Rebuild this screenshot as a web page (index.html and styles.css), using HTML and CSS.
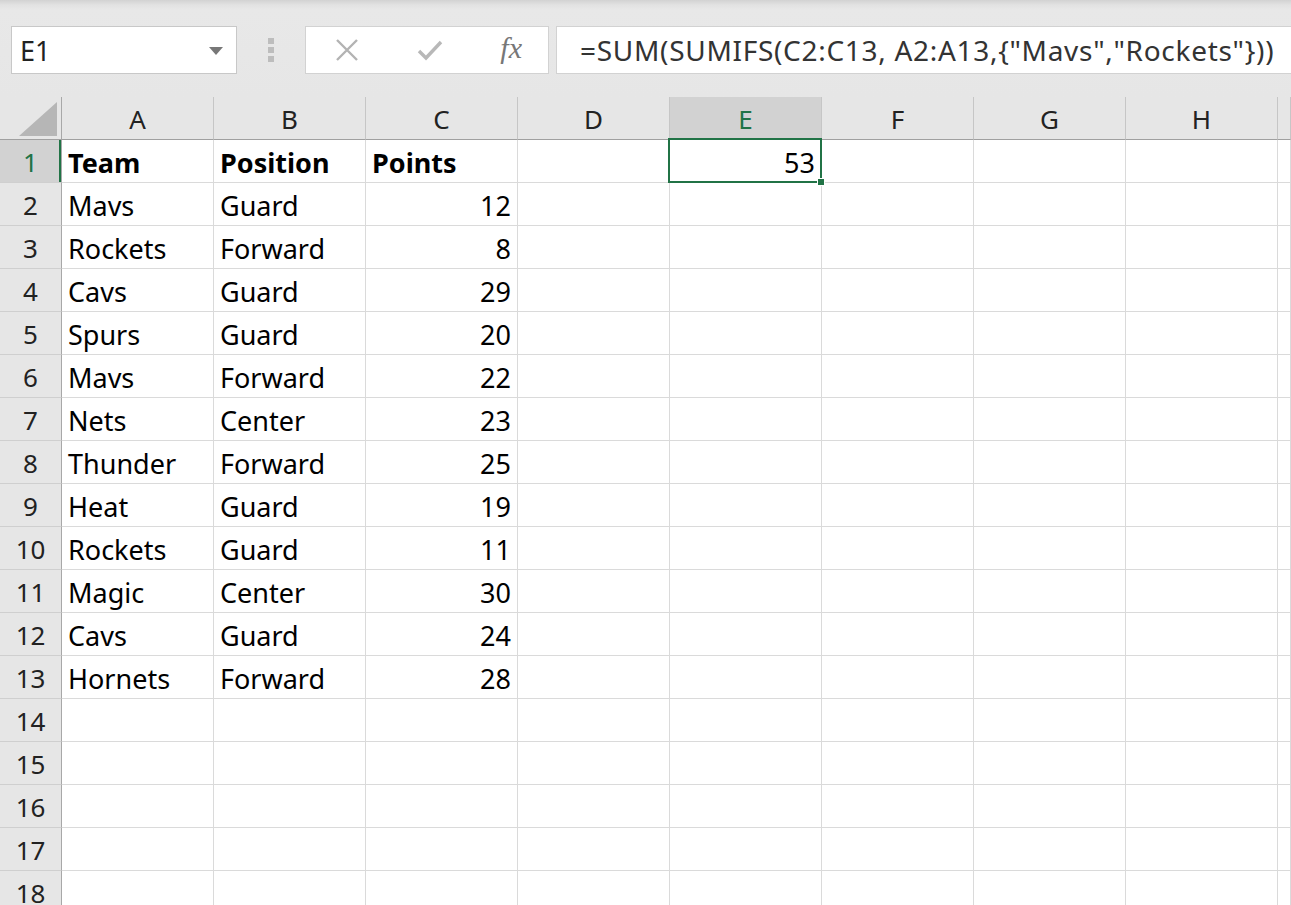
FILE: index.html
```html
<!DOCTYPE html>
<html lang="en">
<head>
    <meta charset="UTF-8">
    <title>Book1 - Excel</title>
    <link rel="stylesheet" href="styles.css">
</head>
<body>
    <div class="toolbar">
        <div class="name-box">
            <span>E1</span>
            <svg class="caret" width="14" height="8" viewBox="0 0 14 8"><path d="M0 0h14L7 8z" fill="#777"/></svg>
        </div>
        <div class="grip"><i></i><i></i><i></i></div>
        <div class="fx-buttons">
            <svg width="24" height="24" viewBox="0 0 24 24"><path d="M2 2L22 22M22 2L2 22" stroke="#b3b3b3" stroke-width="2.4" fill="none"/></svg>
            <svg width="26" height="22" viewBox="0 0 26 22"><path d="M2 12L9 19L24 3" stroke="#b8b8b8" stroke-width="3.4" fill="none"/></svg>
            <span class="fx">fx</span>
        </div>
        <div class="formula">=SUM(SUMIFS(C2:C13, A2:A13,{"Mavs","Rockets"}))</div>
    </div>

    <div class="sheet" id="sheet">
        <div class="corner"><span class="tri"></span></div>
    </div>

    <script>
        const cols = ["A", "B", "C", "D", "E", "F", "G", "H", ""];
        const rows = [
            ["Team", "Position", "Points"],
            ["Mavs", "Guard", 12],
            ["Rockets", "Forward", 8],
            ["Cavs", "Guard", 29],
            ["Spurs", "Guard", 20],
            ["Mavs", "Forward", 22],
            ["Nets", "Center", 23],
            ["Thunder", "Forward", 25],
            ["Heat", "Guard", 19],
            ["Rockets", "Guard", 11],
            ["Magic", "Center", 30],
            ["Cavs", "Guard", 24],
            ["Hornets", "Forward", 28]
        ];
        const sheet = document.getElementById("sheet");

        function cell(cls, text) {
            const el = document.createElement("div");
            el.className = cls;
            if (text !== undefined) el.textContent = text;
            sheet.appendChild(el);
            return el;
        }

        cols.forEach(c => cell(c === "E" ? "col-head active" : "col-head", c));

        for (let r = 1; r <= 19; r++) {
            cell(r === 1 ? "row-head active" : "row-head", r);
            const data = rows[r - 1] || [];
            cols.forEach((c, i) => {
                let cls = "cell";
                let text = data[i];
                if (r === 1 && i < 3) cls += " bold";
                if (typeof text === "number") cls += " num";
                const el = cell(cls, text);
                if (r === 1 && c === "E") {
                    el.className = "cell num selected";
                    el.textContent = "53";
                    const h = document.createElement("span");
                    h.className = "handle";
                    el.appendChild(h);
                }
            });
        }
    </script>
</body>
</html>
```

FILE: styles.css
```css
body {
    margin: 0;
    height: 905px;
    overflow: hidden;
    background: #fff;
    font-family: "Noto Sans", "Open Sans", sans-serif;
    color: #000;
}
.toolbar {
    height: 97px;
    box-sizing: border-box;
    padding: 26px 0 0 11px;
    display: flex;
    align-items: flex-start;
    background: linear-gradient(180deg, #d2d2d2 0, #e2e2e2 5px, #e8e8e8 10px, #e6e6e6 100%);
}
.name-box {
    width: 226px;
    height: 48px;
    box-sizing: border-box;
    background: #fff;
    border: 1px solid #c8c8c8;
    display: flex;
    align-items: center;
    justify-content: space-between;
    padding: 0 13px 0 8px;
    font-size: 27px;
    color: #222;
}
.caret {
    margin-top: 2px;
}
.grip {
    width: 68px;
    height: 48px;
    display: flex;
    flex-direction: column;
    align-items: center;
    justify-content: center;
    gap: 3px;
}
.grip i {
    width: 6px;
    height: 6px;
    background: #bdbdbd;
}
.fx-buttons {
    width: 244px;
    height: 48px;
    box-sizing: border-box;
    background: #fff;
    border: 1px solid #d2d2d2;
    display: flex;
    align-items: center;
    justify-content: space-between;
    padding: 0 26px 0 29px;
}
.fx {
    font-family: "Liberation Serif", serif;
    font-style: italic;
    font-size: 30px;
    color: #777;
    margin-top: -4px;
}
.formula {
    flex: 1;
    margin-left: 7px;
    height: 48px;
    box-sizing: border-box;
    background: #fff;
    border: 1px solid #d2d2d2;
    border-right: none;
    padding-left: 23px;
    font-size: 28px;
    letter-spacing: 0.7px;
    line-height: 46px;
    color: #333;
    white-space: nowrap;
    overflow: hidden;
}
.sheet {
    display: grid;
    grid-template-columns: 62px repeat(8, 152px) 1fr;
    grid-auto-rows: 43px;
}
.sheet > div {
    box-sizing: border-box;
    border-right: 1px solid #dadada;
    border-bottom: 1px solid #dadada;
    display: flex;
    align-items: center;
    font-size: 27px;
    white-space: nowrap;
}
.sheet > .corner {
    background: #e6e6e6;
    border-right: 1px solid #a8a8a8;
    border-bottom: 1px solid #a0a0a0;
    position: relative;
}
.tri {
    position: absolute;
    right: 4px;
    bottom: 3px;
    width: 0;
    height: 0;
    border-left: 38px solid transparent;
    border-bottom: 34px solid #b6b6b6;
}
.sheet > .col-head {
    background: #e6e6e6;
    border-right: 1px solid #c6c6c6;
    border-bottom: 1px solid #a0a0a0;
    justify-content: center;
    font-size: 26px;
    color: #222;
    padding-top: 2px;
}
.sheet > .row-head {
    background: #e6e6e6;
    border-right: 1px solid #a8a8a8;
    border-bottom: 1px solid #cfcfcf;
    justify-content: center;
    font-size: 26px;
    color: #222;
    padding-top: 2px;
}
.sheet > .active {
    background: #d2d2d2;
    color: #217346;
}
.sheet > .row-head.active {
    box-shadow: inset -2px 0 0 #217346;
}
.cell {
    padding: 3px 6px 0;
}
.bold {
    font-weight: bold;
}
.num {
    justify-content: flex-end;
}
.selected {
    position: relative;
}
.selected::after {
    content: "";
    position: absolute;
    left: -2px;
    top: -2px;
    right: -1px;
    bottom: -1px;
    border: 2px solid #217346;
}
.handle {
    position: absolute;
    right: -4px;
    bottom: -4px;
    width: 6px;
    height: 6px;
    background: #217346;
    border: 1px solid #fff;
    z-index: 1;
}
```
